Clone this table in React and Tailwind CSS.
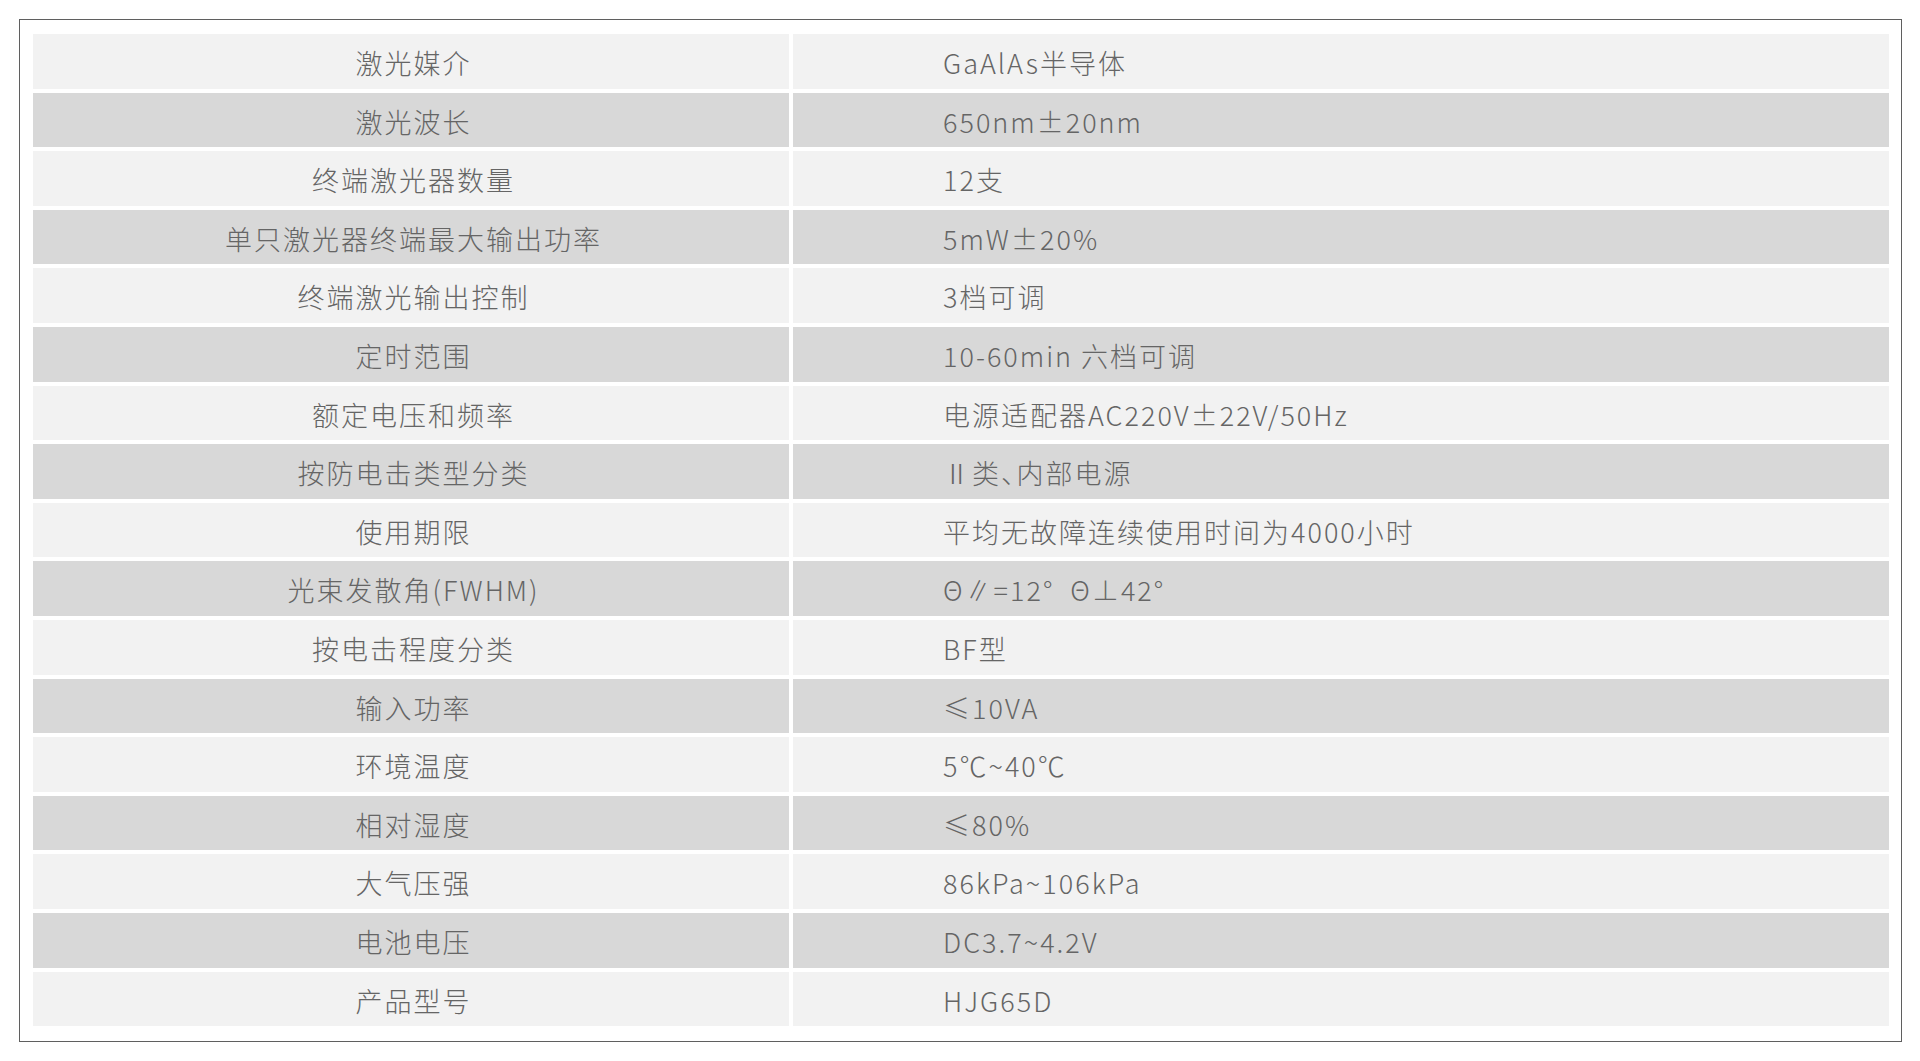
import React from "react";

const rows = [
  ["激光媒介", "GaAlAs半导体"],
  ["激光波长", "650nm±20nm"],
  ["终端激光器数量", "12支"],
  ["单只激光器终端最大输出功率", "5mW±20%"],
  ["终端激光输出控制", "3档可调"],
  ["定时范围", "10-60min 六档可调"],
  ["额定电压和频率", "电源适配器AC220V±22V/50Hz"],
  ["按防电击类型分类", "Ⅱ类、内部电源", true],
  ["使用期限", "平均无故障连续使用时间为4000小时"],
  ["光束发散角(FWHM)", "Θ∥=12°  Θ⊥42°"],
  ["按电击程度分类", "BF型"],
  ["输入功率", "≤10VA"],
  ["环境温度", "5℃~40℃"],
  ["相对湿度", "≤80%"],
  ["大气压强", "86kPa~106kPa"],
  ["电池电压", "DC3.7~4.2V"],
  ["产品型号", "HJG65D"],
];

export default function App() {
  return (
    <div
      className="w-[1920px] h-[1061px] bg-white pt-[19px] pl-[19px] pr-[18px] pb-[19px]"
      style={{ fontFamily: '"Noto Sans CJK SC Light", "Noto Sans CJK SC", "Noto Sans", sans-serif' }}
    >
      <div className="h-full border border-[#5f5f5f] pt-[14px] pl-[13px] pr-[12px]">
        <div className="grid grid-cols-[756px_1fr] gap-[4px]">
          {rows.map(([k, v, halt], i) => {
            const bg = i % 2 === 0 ? "bg-[#f2f2f2]" : "bg-[#d8d8d8]";
            return (
              <React.Fragment key={i}>
                <div
                  className={`${bg} h-[54.6px] flex items-center justify-center pt-[4px] pl-[5px] text-[27px] font-light tracking-[2px] text-[#656565] whitespace-pre`}
                >
                  {k}
                </div>
                <div
                  className={`${bg} h-[54.6px] flex items-center pl-[150px] pt-[4px] text-[27px] font-light tracking-[2px] text-[#656565] whitespace-pre ${halt ? "[font-feature-settings:'halt']" : ""}`}
                >
                  {v}
                </div>
              </React.Fragment>
            );
          })}
        </div>
      </div>
    </div>
  );
}
